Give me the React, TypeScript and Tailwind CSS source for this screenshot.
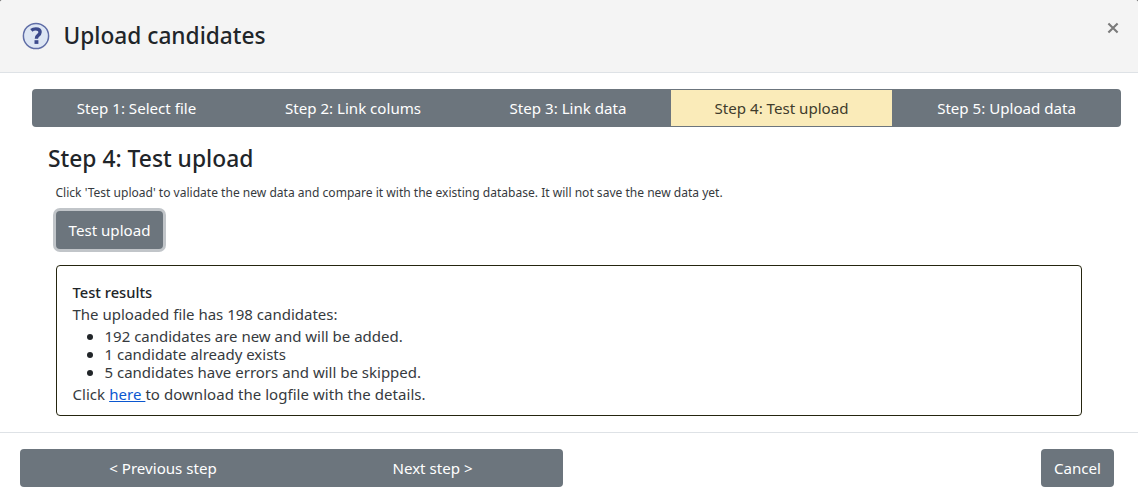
const steps = [
  { label: "Step 1: Select file", width: "w-[209px]" },
  { label: "Step 2: Link colums", width: "w-[224px]" },
  { label: "Step 3: Link data", width: "w-[206px]" },
  { label: "Step 4: Test upload", width: "w-[221px]", active: true },
  { label: "Step 5: Upload data", width: "w-[229px]" },
];

const results = [
  "192 candidates are new and will be added.",
  "1 candidate already exists",
  "5 candidates have errors and will be skipped.",
];

function HelpIcon() {
  return (
    <svg width="28" height="28" viewBox="0 0 28 28" fill="none" aria-hidden="true">
      <circle cx="14" cy="14" r="12.6" fill="#dde6f4" stroke="#5f6da6" strokeWidth="1.5" />
      <path
        d="M9.3 8.4C10.6 7.3 12.2 6.9 13.8 6.9c2.8 0 4.3 1.3 4.3 3.2 0 1.6-.8 2.5-2.1 3.4-1.2.8-1.6 1.5-1.6 3.2"
        stroke="#3c4a8c"
        strokeWidth="3.4"
      />
      <rect x="12.5" y="18.2" width="3.9" height="3.7" fill="#3c4a8c" />
    </svg>
  );
}

function CloseIcon() {
  return (
    <svg width="12" height="12" viewBox="0 0 12 12" aria-hidden="true">
      <path d="M1.4 1.4 10.6 10.6M10.6 1.4 1.4 10.6" stroke="#7a7a7a" strokeWidth="2.1" />
    </svg>
  );
}

export default function App() {
  return (
    <div className="bg-[#707070]">
      <div className="flex h-[500px] w-[1138px] flex-col overflow-hidden rounded-t-[3px] bg-white font-['Noto_Sans',sans-serif] text-[15px] text-[#212529]">
        <header className="flex h-[73px] shrink-0 items-start justify-between border-b border-[#dee2e6] bg-[#f4f4f4] pr-[19px] pl-[22px]">
          <div className="flex h-[71px] items-center gap-[13.5px]">
            <HelpIcon />
            <h1 className="text-[22.7px] leading-7 font-medium">Upload candidates</h1>
          </div>
          <button aria-label="Close" className="mt-[22px]">
            <CloseIcon />
          </button>
        </header>

        <main className="flex h-[359px] shrink-0 flex-col pt-4 pr-[17px] pl-8">
          <nav className="flex h-[38px] shrink-0 overflow-hidden rounded bg-[#6c757d] py-px text-[15.1px] text-white">
            {steps.map((s) => (
              <button
                key={s.label}
                className={`${s.width} ${s.active ? "bg-[#faebb9] text-[#3f3c2c]" : ""} h-9 shrink-0 whitespace-nowrap`}
              >
                {s.label}
              </button>
            ))}
          </nav>

          <h2 className="mt-[17px] pl-4 text-[22.8px] leading-[29px] font-medium">Step 4: Test upload</h2>
          <p className="mt-[11px] pl-[23.5px] text-[12.05px] leading-[18px] whitespace-nowrap text-[#363a3e]">
            Click 'Test upload' to validate the new data and compare it with the existing database. It will not save the new data yet.
          </p>
          <button className="mt-[9px] ml-6 h-[38px] w-[107px] shrink-0 rounded bg-[#6c757d] text-[15.1px] text-white ring-3 ring-[#c1c5c9]">
            Test upload
          </button>

          <section className="mt-4 ml-6 h-[151px] w-[1026px] shrink-0 rounded border border-[#25250f] px-[15.5px] pt-[15px] leading-[22px] text-[#363a3e]">
            <h3 className="text-[14.7px] font-medium text-[#212529]">Test results</h3>
            <p>The uploaded file has 198 candidates:</p>
            <ul className="my-0.5">
              {results.map((r) => (
                <li key={r} className="flex h-[18px] items-center pl-[14px] leading-[18px]">
                  <span className="mt-0.5 mr-3 size-[6px] shrink-0 rounded-full bg-[#212529]" />
                  {r}
                </li>
              ))}
            </ul>
            <p className="tracking-[0.05px]">
              Click <a href="#" className="text-[#0b57d0] underline">here </a>to download the logfile with the details.
            </p>
          </section>
        </main>

        <footer className="flex h-[68px] shrink-0 items-start justify-between border-t border-[#dee2e6] pt-4 pr-6 pl-5 text-[15.1px] text-white">
          <div className="flex h-[38px] w-[543px] rounded bg-[#6c757d]">
            <button className="w-[286px]">&lt; Previous step</button>
            <button className="w-[253px] whitespace-nowrap">Next step &gt;</button>
          </div>
          <button className="h-[38px] w-[73px] rounded bg-[#6c757d]">Cancel</button>
        </footer>
      </div>
    </div>
  );
}
